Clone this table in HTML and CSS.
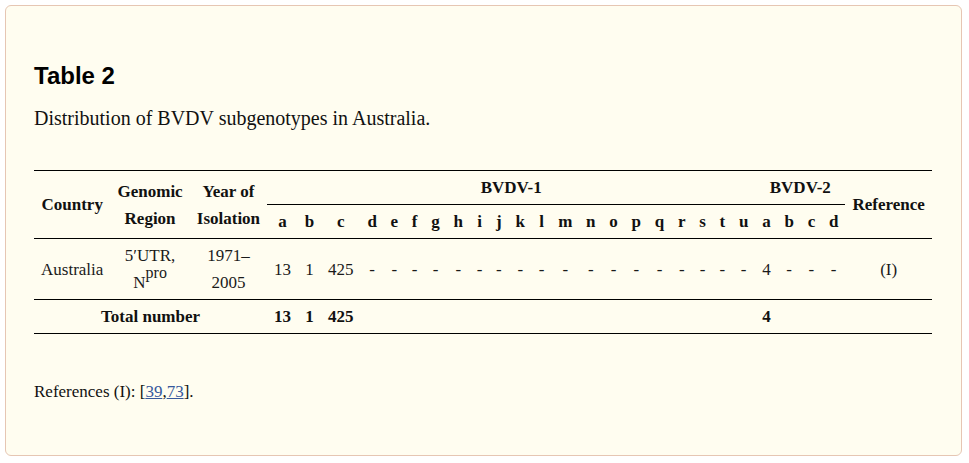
FILE: index.html
```html
<!DOCTYPE html>
<html lang="en">
<head>
<meta charset="utf-8">
<title>Table 2</title>
<link rel="stylesheet" href="styles.css">
</head>
<body>
<div class="panel">
  <h2 class="title">Table 2</h2>
  <p class="caption">Distribution of BVDV subgenotypes in Australia.</p>
  <table class="data">
    <thead>
      <tr>
        <th rowspan="2">Country</th>
        <th rowspan="2">Genomic<br>Region</th>
        <th rowspan="2">Year of<br>Isolation</th>
        <th colspan="21" class="group">BVDV-1</th>
        <th colspan="4" class="group">BVDV-2</th>
        <th rowspan="2">Reference</th>
      </tr>
      <tr class="letters">
        <th>a</th><th>b</th><th>c</th><th>d</th><th>e</th><th>f</th><th>g</th><th>h</th><th>i</th><th>j</th><th>k</th><th>l</th><th>m</th><th>n</th><th>o</th><th>p</th><th>q</th><th>r</th><th>s</th><th>t</th><th>u</th>
        <th>a</th><th>b</th><th>c</th><th>d</th>
      </tr>
    </thead>
    <tbody>
      <tr class="row">
        <td>Australia</td>
        <td>5′UTR,<br>N<sup>pro</sup></td>
        <td>1971–<br>2005</td>
        <td>13</td><td>1</td><td>425</td>
        <td>-</td><td>-</td><td>-</td><td>-</td><td>-</td><td>-</td><td>-</td><td>-</td><td>-</td><td>-</td><td>-</td><td>-</td><td>-</td><td>-</td><td>-</td><td>-</td><td>-</td><td>-</td>
        <td>4</td><td>-</td><td>-</td><td>-</td>
        <td>(I)</td>
      </tr>
      <tr class="total">
        <td colspan="3">Total number</td>
        <td>13</td><td>1</td><td>425</td>
        <td></td><td></td><td></td><td></td><td></td><td></td><td></td><td></td><td></td><td></td><td></td><td></td><td></td><td></td><td></td><td></td><td></td><td></td>
        <td>4</td><td></td><td></td><td></td>
        <td></td>
      </tr>
    </tbody>
  </table>
  <p class="refs">References (I): [<a href="#r39">39</a>,<a href="#r73">73</a>].</p>
</div>
</body>
</html>
```
FILE: styles.css
```css
html, body {
  margin: 0;
  padding: 0;
  background: #ffffff;
}

body {
  padding: 5px;
  font-family: "Liberation Serif", "Times New Roman", serif;
  color: #111111;
}

.panel {
  width: 957px;
  height: 451px;
  box-sizing: border-box;
  border: 1px solid #e6c6b3;
  border-radius: 6px;
  background: #fffdf0;
  padding: 56px 29px 0 28px;
}

.title {
  margin: 0;
  font-family: "Liberation Sans", Arial, sans-serif;
  font-size: 24px;
  font-weight: bold;
  line-height: 28px;
  color: #000000;
}

.caption {
  margin: 16px 0 0 0;
  font-size: 20px;
  line-height: 24px;
}

.data {
  width: 100%;
  margin-top: 40px;
  border-collapse: collapse;
  font-size: 17px;
  line-height: 27px;
  border-top: 1px solid #000000;
  border-bottom: 1px solid #000000;
}

.data th,
.data td {
  padding: 3px 6.8px;
  text-align: center;
  vertical-align: middle;
  white-space: nowrap;
}

.data th {
  font-weight: bold;
}

.data .group {
  border-bottom: 1px solid #000000;
}

.data thead {
  border-bottom: 1px solid #000000;
}

.data .row {
  border-bottom: 1px solid #000000;
}

.data .row td {
  color: #1a1a1a;
}

.data sup {
  font-size: 16px;
  line-height: 0;
  vertical-align: 10px;
}

.data .total td {
  font-weight: bold;
}

.refs {
  margin: 46px 0 0 0;
  font-size: 17px;
  line-height: 24px;
}

.refs a {
  color: #36589c;
  text-decoration: underline;
}
```
